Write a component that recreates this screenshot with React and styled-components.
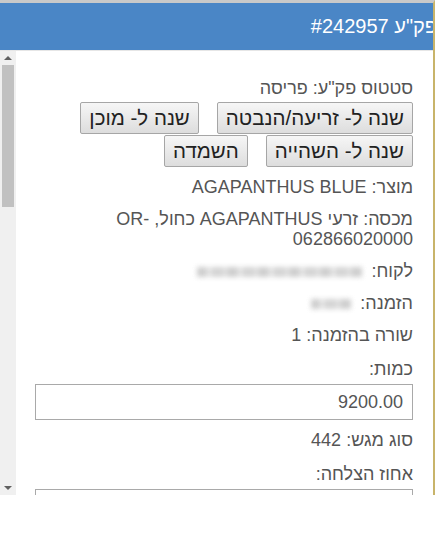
import styled, { createGlobalStyle } from "styled-components";

const GlobalStyle = createGlobalStyle`
  html, body {
    margin: 0;
    padding: 0;
    background: #fff;
  }
  body {
    font-family: "Liberation Sans", Arial, sans-serif;
  }
`;

const Frame = styled.div`
  width: 433px;
  height: 492px;
  border-top: 3px solid #c9c9c9;
  border-right: 2px solid #c8b46a;
  display: flex;
  flex-direction: column;
  direction: rtl;
  overflow: hidden;
`;

const Header = styled.div`
  height: 47px;
  flex-shrink: 0;
  background: #4a86c6;
  color: #fff;
  font-size: 20px;
  display: flex;
  align-items: center;
  overflow: hidden;
  white-space: nowrap;
`;

const Title = styled.span`
  margin-right: -4px;
`;

const Body = styled.div`
  flex: 1;
  display: flex;
  flex-direction: row;
  min-height: 0;
  border-top: 1px solid #e6e6e6;
`;

const Content = styled.div`
  flex: 1;
  padding: 27px 20px 0 19px;
  color: #555;
  font-size: 18px;
  overflow: hidden;
`;

const ScrollBar = styled.div`
  width: 16px;
  flex-shrink: 0;
  background: #f0f0f0;
  display: flex;
  flex-direction: column;
  align-items: center;
`;

const Arrow = styled.div`
  height: 14px;
  width: 16px;
  display: flex;
  align-items: center;
  justify-content: center;
  &::after {
    content: "";
    border-left: 4px solid transparent;
    border-right: 4px solid transparent;
    ${(p) =>
      p.$up
        ? "border-bottom: 4px solid #606060;"
        : "border-top: 4px solid #606060;"}
  }
`;

const Track = styled.div`
  flex: 1;
  width: 100%;
  display: flex;
  flex-direction: column;
`;

const Thumb = styled.div`
  margin: 0 2px;
  height: 142px;
  background: #c1c1c1;
`;

const Status = styled.div`
  line-height: 20px;
  margin-bottom: 4px;
`;

const Buttons = styled.div`
  display: flex;
  flex-direction: column;
  row-gap: 1px;
  margin-bottom: 10px;
`;

const ButtonRow = styled.div`
  display: flex;
  gap: 18px;
`;

const Button = styled.button`
  font-family: "Liberation Sans", Arial, sans-serif;
  font-size: 20.5px;
  color: #222;
  height: 32px;
  padding: 0 8px;
  margin: 0;
  background: linear-gradient(#f6f6f6, #dddddd);
  border: 1px solid #a6a6a6;
  border-radius: 2px;
`;

const Field = styled.div`
  line-height: 20px;
  margin-bottom: 12px;
`;

const Blur = styled.span`
  display: inline-block;
  width: ${(p) => p.$w}px;
  height: 10px;
  margin-right: 4px;
  vertical-align: middle;
  background: repeating-linear-gradient(
    to left,
    #c6c6c6 0 11px,
    #e2e2e2 11px 14px,
    #cdcdcd 14px 27px,
    #e6e6e6 27px 31px
  );
  filter: blur(2.5px);
  opacity: 0.85;
`;

const Label = styled.div`
  line-height: 20px;
  margin-top: 14px;
  margin-bottom: 5px;
`;

const Input = styled.input`
  display: block;
  box-sizing: border-box;
  width: 100%;
  height: 36px;
  border: 1px solid #a9a9a9;
  font-family: "Liberation Sans", Arial, sans-serif;
  font-size: 18px;
  color: #555;
  text-align: right;
  padding: 0 9px;
  margin: 0 0 10px;
  direction: ltr;
`;

export default function App() {
  return (
    <>
      <GlobalStyle />
      <Frame>
        <Header>
          <Title>פק"ע #242957</Title>
        </Header>
        <Body>
          <Content>
            <Status>סטטוס פק"ע: פריסה</Status>
            <Buttons>
              <ButtonRow>
                <Button>שנה ל- זריעה/הנבטה</Button>
                <Button>שנה ל- מוכן</Button>
              </ButtonRow>
              <ButtonRow>
                <Button>שנה ל- השהייה</Button>
                <Button>השמדה</Button>
              </ButtonRow>
            </Buttons>
            <Field>מוצר: AGAPANTHUS BLUE</Field>
            <Field>מכסה: זרעי AGAPANTHUS כחול, OR-062866020000</Field>
            <Field>
              לקוח: <Blur $w={165} />
            </Field>
            <Field>
              הזמנה: <Blur $w={40} />
            </Field>
            <Field>שורה בהזמנה: 1</Field>
            <Label>כמות:</Label>
            <Input defaultValue="9200.00" />
            <Field>סוג מגש: 442</Field>
            <Label>אחוז הצלחה:</Label>
            <Input defaultValue="" />
          </Content>
          <ScrollBar>
            <Arrow $up />
            <Track>
              <Thumb />
            </Track>
            <Arrow />
          </ScrollBar>
        </Body>
      </Frame>
    </>
  );
}
